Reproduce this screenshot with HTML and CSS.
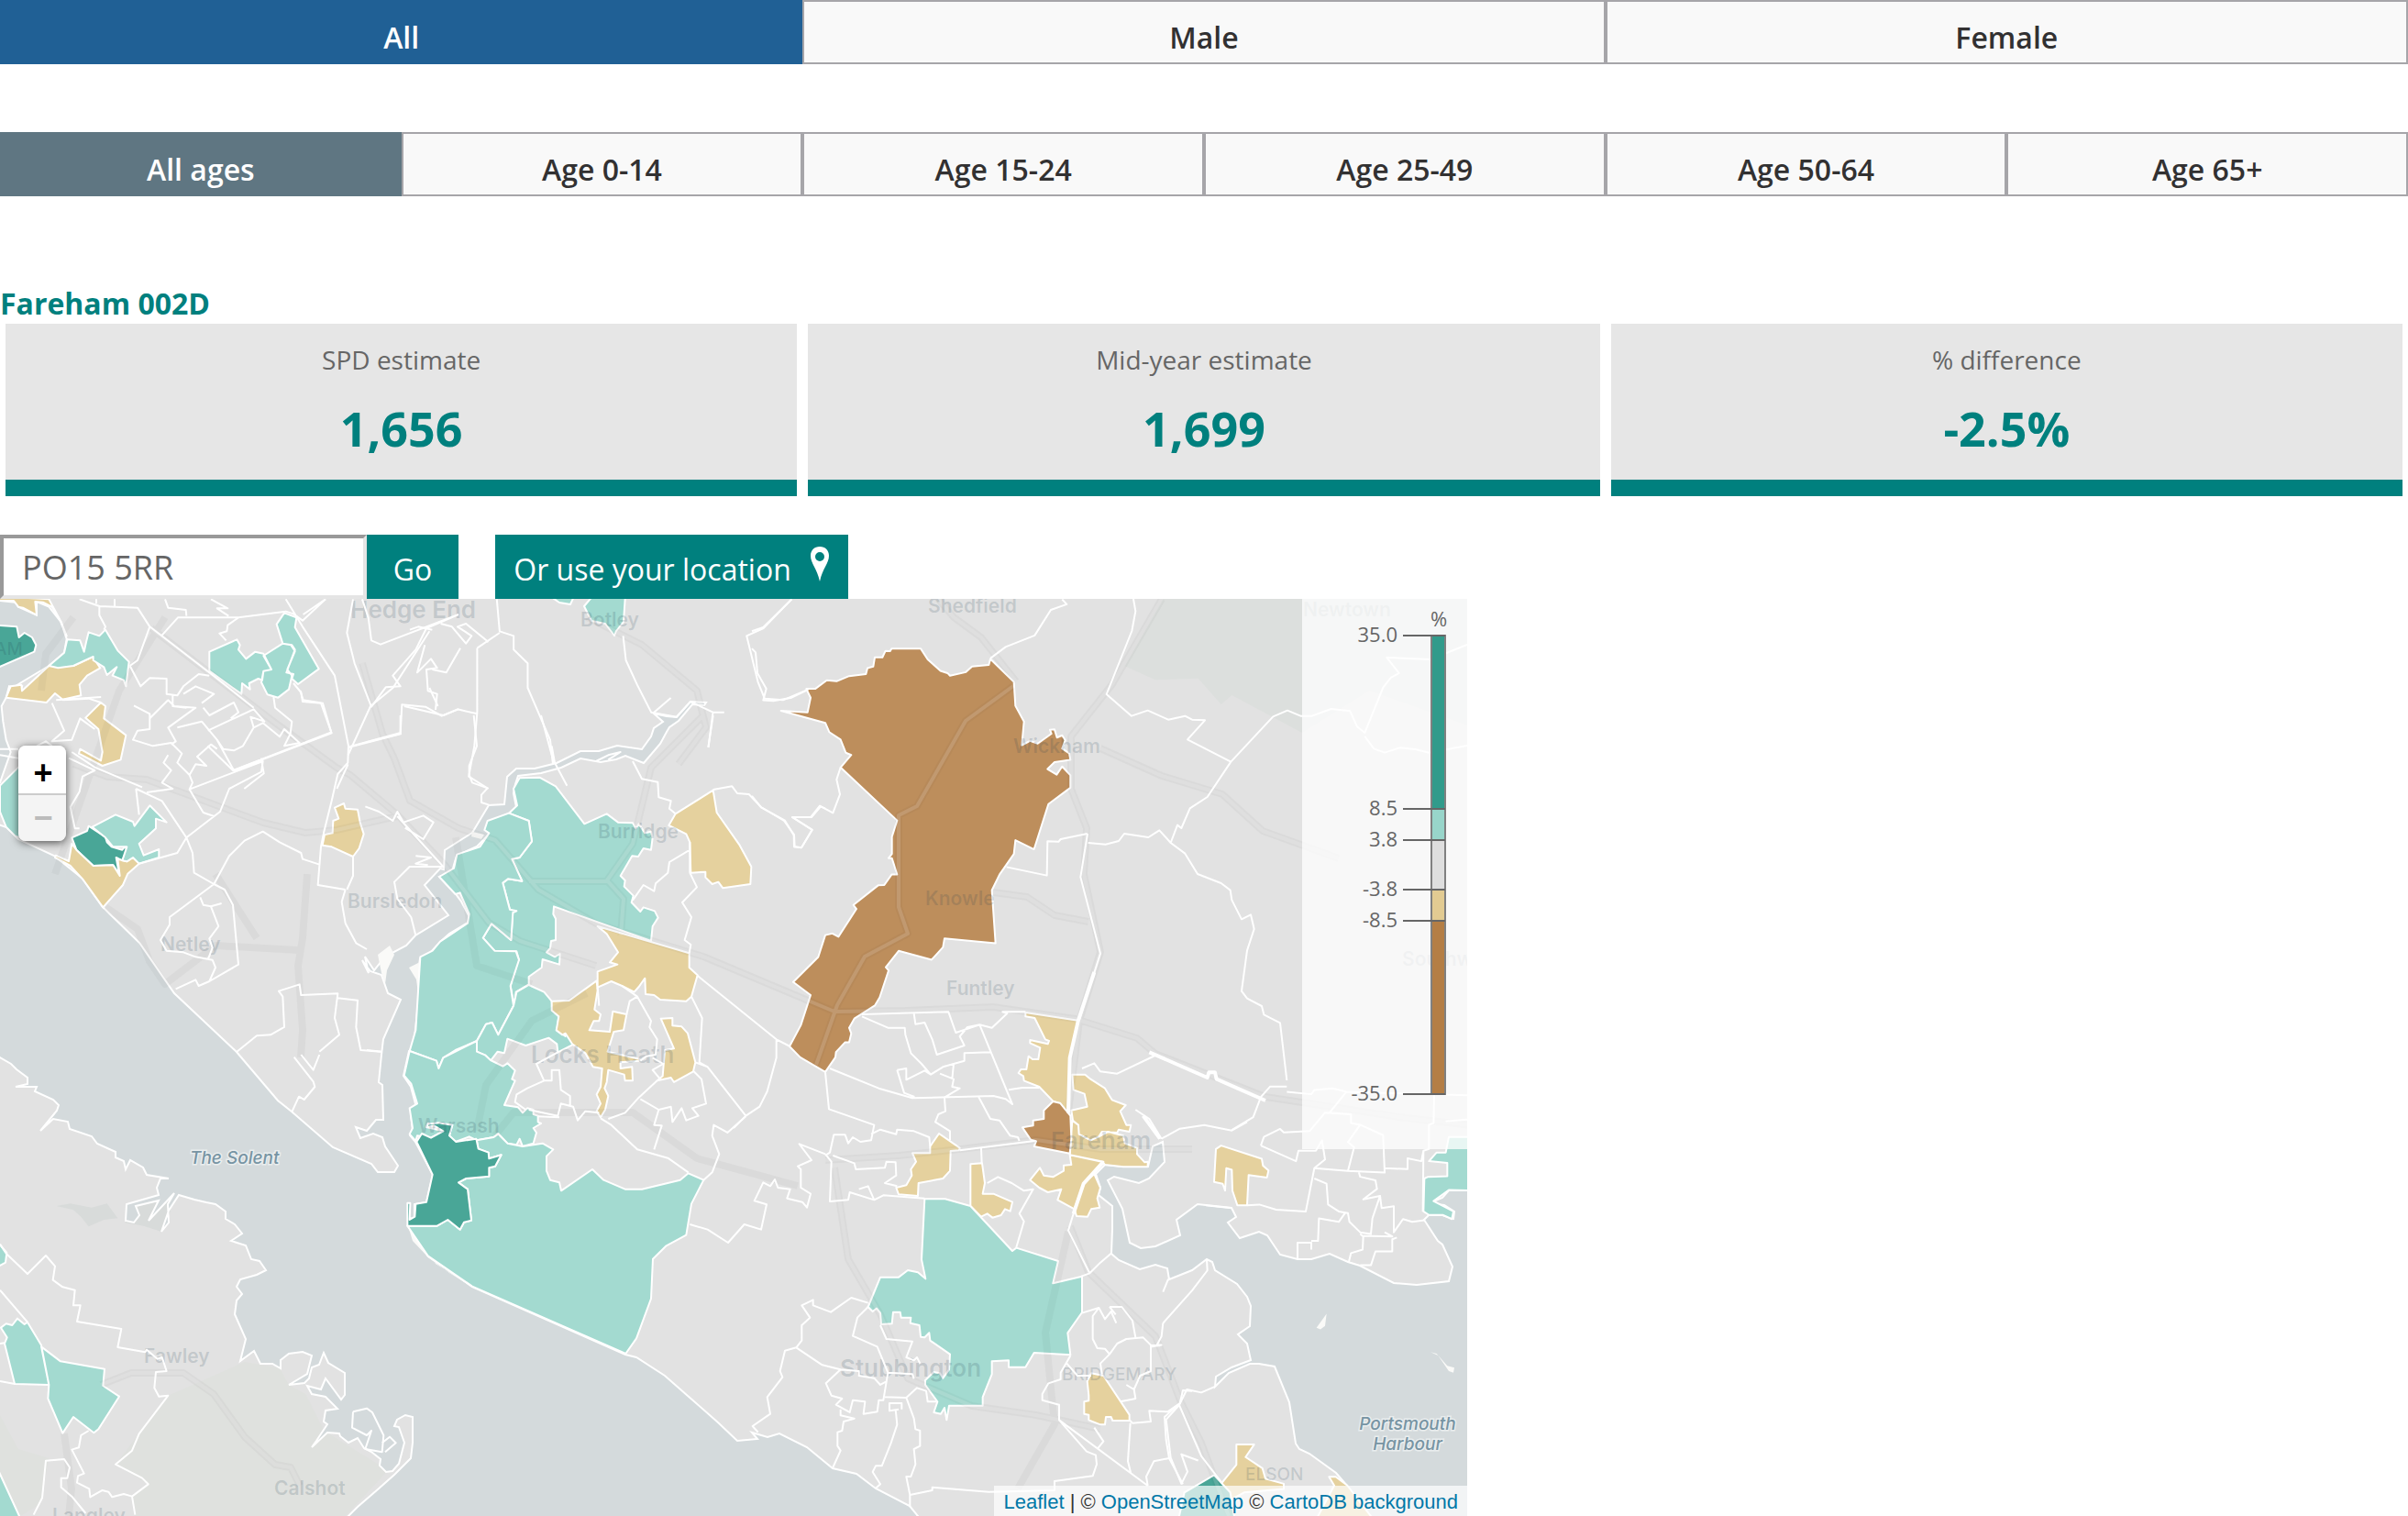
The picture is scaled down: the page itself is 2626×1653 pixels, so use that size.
FILE: index.html
```html
<!DOCTYPE html>
<html lang="en">
<head>
<meta charset="utf-8">
<title>Population estimates by area</title>
<link rel="stylesheet" href="styles.css">
</head>
<body>
<nav class="tabs tabs-sex" aria-label="Sex">
  <button class="tab selected" type="button">All</button>
  <button class="tab" type="button">Male</button>
  <button class="tab" type="button">Female</button>
</nav>
<nav class="tabs tabs-age" aria-label="Age group">
  <button class="tab selected" type="button">All ages</button>
  <button class="tab" type="button">Age 0-14</button>
  <button class="tab" type="button">Age 15-24</button>
  <button class="tab" type="button">Age 25-49</button>
  <button class="tab" type="button">Age 50-64</button>
  <button class="tab" type="button">Age 65+</button>
</nav>
<main>
  <h2 class="area-name">Fareham 002D</h2>
  <div class="cards">
    <section class="card"><h3 class="card-label">SPD estimate</h3><p class="card-value">1,656</p></section>
    <section class="card"><h3 class="card-label">Mid-year estimate</h3><p class="card-value">1,699</p></section>
    <section class="card"><h3 class="card-label">% difference</h3><p class="card-value">-2.5%</p></section>
  </div>
  <form class="search">
    <input class="postcode" type="text" aria-label="Postcode" value="PO15 5RR">
    <button class="btn go" type="button">Go</button>
    <button class="btn locate" type="button">Or use your location
      <svg class="pin" viewBox="0 0 22 38" aria-hidden="true"><path fill-rule="evenodd" d="M11 0C5 0 1 4 1 10c0 8 7 14 10 28 3-14 10-20 10-28 0-6-4-10-10-10zm0 6a5 5 0 0 1 5 5 5 5 0 0 1-10 0 5 5 0 0 1 5-5z"/></svg>
    </button>
  </form>
  <div class="map">
    <svg class="map-canvas" viewBox="0 0 1600 1000" role="img" aria-label="Map of the Solent area">
      <rect class="land" width="1600" height="1000"/>
      <!-- woodland -->
      <g transform="translate(1060,0) scale(.33333)"><path class="wood" d="M625 0H1640V420L1300 300 1080 438 850 315 815 345 740 260 600 265 500 220Z"/></g>
      <g transform="translate(0,497) scale(.33333)"><path class="heath" d="M550 1115 800 1005 915 1025 945 1080 1000 1110 1060 1230 1245 1345 1265 1365 1130 1509 440 1509 435 1445 485 1405 378 1340 455 1240ZM0 1180 60 1290 160 1320 130 1470 68 1509 0 1370Z"/><path class="marsh" d="M185 495 230 487 300 500 350 487 385 535 340 540 290 562 265 530 240 508ZM410 550 440 500 520 478 570 455 555 520 530 580 470 560Z"/></g>
      <!-- water -->
      <g transform="translate(0,-13) scale(.33333)"><path class="water" d="M0 45 50 50 60 65 120 92 120 48 160 65 200 115 218 170 210 215 160 258 70 312 50 325 72 325 65 345 50 330 30 325 20 362 5 390 10 440 20 500 35 540 0 640-20 640-20 45Z"/></g>
      <path class="water" d="M-5 245 7 249 20 262 59 280 90 305 112 336 152 375 190 430 258 494 303 547 318 559 363 598 405 616 412 625 430 625 434 618 420 597 417 587 407 583 393 588 388 576 400 580 410 568 418 568 417 530 413 527 416 497 418 480 437 437 423 430 416 410 404 406 395 394 402 408 398 390 408 405 420 390 443 378 453 367 489 345 463 312 480 294 484 295 485 274 515 255 533 225 550 224 553 194 563 185 583 185 607 179 633 166 653 166 673 160 700 164 710 150 713 141 723 134 713 125 727 128 738 129 753 112 770 113 768 116 755 115 740 133 730 140 727 145 720 158 702 179 682 171 672 175 655 178 633 174 612 184 590 190 565 193 562 202 560 212 563 227 555 234 540 240 535 255 520 270 498 280 495 290 493 298 479 303 497 322 503 330 512 347 510 353 490 365 480 374 470 385 458 392 457 400 460 410 457 430 453 470 450 490 446 493 440 520 448 532 455 558 448 562 450 580 447 585 453 592 472 628 465 658 452 660 452 676 445 675 445 684 467 717 515 750 682 824 694 827 725 847 783 898 804 918 826 916 820 909 837 914 850 910 880 925 908 948 934 954 955 970 992 989 1005 1005 375 1005 390 990 412 971 430 955 448 937 450 920 450 892 442 890 433 895 430 902 435 903 441 920 435 943 428 951 421 952 414 945 415 938 405 930 397 926 390 915 380 920 371 913 370 910 357 909 340 925 345 918 357 900 353 897 355 885 368 883 355 870 340 867 335 858 350 862 355 850 372 873 376 868 376 844 358 833 353 822 348 835 340 838 337 850 332 855 315 857 335 845 340 825 330 821 315 823 306 830 306 839 297 834 284 834 277 820 262 831 268 807 256 780 258 765 264 758 258 750 262 742 280 737 290 732 283 722 274 720 268 705 252 700 264 692 256 682 246 676 246 668 235 660 225 658 212 655 195 650 184 667 176 690 184 680 183 660 190 648 162 678 173 656 148 662 152 672 146 680 137 678 138 660 173 650 171 642 175 632 184 632 160 628 156 620 142 612 137 622 135 613 126 609 126 603 106 594 100 586 76 578 74 570 58 567 44 580 62 558 64 552 58 546 38 537 40 532 17 532 30 529 30 522 18 513 12 507 0 500-5 497Z"/>
      <path class="water" d="M1268 592 1270 614 1253 632 1242 637 1215 630 1208 634 1224 665 1232 702 1244 708 1260 706 1287 694 1283 677 1306 660 1343 664 1348 674 1339 680 1352 697 1373 690 1382 694 1396 715 1415 720 1430 720 1450 714 1470 723 1483 727 1520 746 1545 748 1580 744 1584 728 1573 704 1568 700 1553 677 1558 672 1573 672 1585 676 1586 668 1575 661 1567 660 1563 657 1573 653 1580 645 1605 645 1605 1005 1498 1005 1469 967 1457 953 1428 932 1417 927 1413 921 1406 876 1390 837 1373 834 1363 834 1340 844 1325 859 1326 848 1343 838 1364 830 1360 812 1350 802 1363 793 1364 771 1360 761 1349 747 1325 732 1322 723 1316 720 1300 732 1275 742 1273 730 1260 726 1243 731 1220 721 1212 714 1213 687 1213 662 1198 650 1200 642 1195 627 1205 617 1225 619 1252 619 1257 597Z"/>
      <path class="spit" d="M445 684 450 700 467 718 490 735 515 750 475 725ZM515 254 528 257 525 262 514 259ZM412 388 425 378 430 388 422 405 420 420 416 408ZM446 402 458 396 460 410 456 430 454 415Z"/>
      <g transform="translate(1200,407) scale(.33333,.3782)"><path class="spit" d="M740 985 735 1020 720 1030 707 1025ZM1080 1095 1100 1100 1135 1135 1158 1140 1155 1155 1140 1150 1105 1105Z"/></g>

      <!-- areas, coloured by band -->
      <g class="areas" transform="translate(0,-13) scale(.33333)">
        <path class="hi2" d="M-10 125 55 130 62 165 80 150 105 165 118 190 112 212-10 265ZM235 820 285 798 290 782 345 818 350 835 365 850 400 860 410 848 415 862 400 895 380 885 390 940 370 910 305 912 250 860Z"/>
        <path class="lo1" d="M-10 30 160 40 195 105 218 160 200 115 170 65 140 50 115 48 120 92 75 68 60 65 45 45-10 45ZM20 362 35 325 70 320 72 340 160 258 240 258 303 228 328 265 285 290 260 320 265 355 205 368 180 348 152 378ZM280 428 330 378 345 390 340 430 412 485 395 565 335 585 258 545 262 530 330 568 335 540 322 465ZM1095 722 1125 708 1130 725 1170 728 1178 770 1190 808 1175 855 1155 882 1085 850 1055 845 1062 810 1088 805 1090 765 1108 758ZM235 840 250 860 305 912 370 910 392 945 385 890 415 898 435 885 455 905 418 938 402 975 337 1048 270 955 230 912 180 885 182 878 225 897Z"/>
        <path class="hi1" d="M160 258 210 215 220 172 262 175 275 212 282 180 290 148 325 160 345 140 385 208 422 245 412 325 405 305 368 290 382 262 350 288 340 262 305 240 305 228 240 258 190 265ZM685 212 775 172 785 190 780 205 805 235 835 212 862 218 888 270 862 275 858 305 845 300 815 315 818 335 792 315 790 350 685 275ZM862 225 925 185 952 190 965 210 940 270 955 290 945 335 910 362 875 352 855 312 862 275 888 270ZM905 122 930 85 970 100 965 132 1043 268 975 318 955 300 960 285 937 280 965 205 955 190 925 185ZM0 650 60 590 80 590 80 825 50 815 20 785 0 735ZM302 785 378 745 435 768 440 782 490 715 545 770 510 758 510 790 455 840 470 878 520 858 520 885 455 905 435 885 415 898 400 895 415 850 370 850 345 820Z"/>
      </g>
      <path class="hi1 area" d="M597-5 627-5 622 6 610 4ZM637 8 648-5 682-5 680 25 672 35 670 40 660 27 645 24Z"/>
      <g class="areas" transform="translate(400,127) scale(.33333)">
        <path class="hi1" d="M500 205 565 203 618 232 712 355 785 322 822 350 870 352 880 370 890 355 910 385 930 380 935 400 930 440 905 435 888 462 868 460 830 525 845 540 842 560 872 590 866 612 895 642 905 628 942 640 953 662 935 690 930 738 612 625 610 650 618 665 618 735 603 738 600 762 588 775 615 790 632 780 630 815 575 798 572 825 530 855 530 880 488 905 482 950 470 885 490 820 420 842 450 808 498 800 490 772 418 770 380 728 408 682 472 735 478 640 468 635 445 548 462 535 508 542 475 470 500 465 540 412 530 345 465 320 492 295 480 240Z"/>
        <path class="hi1" d="M465 320 530 345 540 412 500 465 475 470 508 542 462 535 445 548 468 635 490 640 478 645 472 735 408 682 380 728 418 770 488 772 498 800 470 885 480 950 430 1045 410 1005 390 1010 360 1065 290 1095 250 1120 235 1155 228 1130 140 1098 160 1030 175 790 215 770 240 740 330 680 335 650 305 580 290 585 237 528 285 500 295 455 370 430 400 385 385 375 395 345Z"/>
        <path class="hi1" d="M490 905 530 882 580 905 605 935 608 965 628 985 622 1030 650 1050 655 1035 672 1055 678 1075 625 1102 622 1075 595 1055 520 1080 460 1058 450 1105 428 1100 405 1130 388 1112 360 1100 360 1065 390 1010 410 1005 430 1045 480 950Z"/>
        <path class="lo1" d="M988 360 1010 322 1133 245 1145 318 1220 425 1258 495 1255 552 1165 565 1150 545 1130 552 1108 530 1108 512 1060 515 1057 415 1045 388ZM755 690 1055 778 1055 825 1082 850 1062 920 1045 935 960 930 940 915 912 912 910 860 890 888 875 905 835 885 800 870 755 890 755 838 820 815 795 808 822 775 785 715ZM605 935 662 933 752 868 755 900 745 962 765 978 760 1000 742 1000 728 1030 795 1035 805 968 850 978 840 1030 808 1035 788 1100 895 1125 890 1130 830 1135 830 1155 868 1150 870 1195 845 1195 842 1175 790 1160 785 1200 778 1220 790 1245 780 1290 765 1315 752 1295 765 1270 752 1240 765 1215 770 1155 740 1150 715 1105 672 1075 650 1040 640 1045 620 1030 628 985 605 965ZM962 992 1000 990 1000 1015 1030 1018 1050 1040 1075 1135 1068 1165 1005 1200 995 1185 950 1195 968 1180 975 1095 1005 1090Z"/>
      </g>
      <g class="areas" transform="translate(400,477) scale(.33333)">
        <path class="hi1" d="M140 48 228 80 235 105 250 70 360 15 360 50 388 62 405 78 445 98 460 88 485 112 475 140 485 145 450 225 495 232 510 250 525 235 545 240 545 255 560 260 560 280 570 285 545 300 555 315 545 350 510 360 500 335 490 355 460 350 430 318 415 330 360 340 335 328 290 345 270 325 280 290 235 290 200 285 195 297 250 310 210 332 165 325 160 342 140 320 150 300 140 235 165 220 145 155 122 128Z"/>
        <path class="hi1" d="M133 620 230 620 265 600 305 632 318 608 342 602 330 500 300 478 325 465 400 458 400 430 420 425 440 388 400 400 398 380 365 368 360 340 415 330 430 320 460 350 510 360 575 350 610 370 588 392 588 440 600 470 630 478 636 505 738 435 775 470 845 500 900 500 1025 470 1052 448 1102 470 1062 548 1045 650 980 685 936 728 930 858 882 988 847 1038 345 818 200 718Z"/>
        <path class="hi2" d="M163 345 180 318 210 332 250 310 220 292 195 298 200 287 235 283 280 290 270 325 292 345 358 335 365 368 398 380 400 400 440 388 420 425 400 430 400 458 325 465 300 478 330 500 342 602 318 608 305 632 265 600 230 620 133 620 133 545 142 545 140 600 157 590 160 548 195 542 215 452Z"/>
      </g>
      <g class="areas" transform="translate(820,-3) scale(.33333,.35714)">
        <path class="lo2" d="M178 283 207 283 245 257 277 260 318 244 373 238 378 220 397 215 402 187 427 187 437 167 452 168 457 160 552 160 575 193 617 228 640 235 648 243 700 232 720 215 775 210 780 192 857 262 862 335 890 383 883 455 910 442 935 450 980 420 975 408 990 407 998 432 1015 425 1025 440 1015 465 1038 480 1042 500 990 507 967 528 997 545 1015 520 1042 547 1042 585 970 635 923 773 862 745 857 787 810 850 785 898 797 1060 630 1045 625 1072 588 1110 480 1083 438 1133 447 1143 418 1225 402 1250 335 1290 318 1318 325 1335 318 1362 305 1362 275 1392 273 1408 240 1453 158 1408 123 1375 160 1310 192 1218 135 1178 217 1102 240 1035 263 1030 283 1040 342 955 332 943 413 883 433 882 457 850 475 850 458 800 447 800 458 787 458 735 475 685 290 523 325 485 307 478 290 438 253 415 240 387 95 350 182 355 192 310Z"/>
      </g>
      <g class="areas" transform="translate(900,407) scale(.33333)">
        <path class="lo1" d="M655 132 827 158 800 280 793 465 768 430 745 422 700 375 650 355 648 340 632 330 640 318 658 318 665 275 678 285 697 285 703 247 670 232 670 222 728 235 732 225 720 220 685 150 655 145ZM808 335 850 335 868 350 915 380 938 418 983 435 965 455 985 500 1000 500 995 522 960 515 955 525 905 522 895 538 868 550 830 530 828 500 810 485 805 452 857 440 848 398 812 385ZM808 485 828 500 830 530 868 550 895 538 925 522 975 535 980 560 1020 575 1020 595 1045 622 1055 620 1055 637 975 637 915 630 905 620 800 598ZM800 598 910 620 845 692 815 775 760 745 772 710 728 720 700 705 670 680 702 640 715 665 745 670 780 650 780 632 805 630ZM845 692 880 660 900 705 890 740 898 770 870 775 858 800 822 798 815 775ZM343 570 372 528 440 575 437 583 410 585 408 650 385 675 305 690 303 732 240 727 232 705 265 697 283 665 280 645 297 620 285 592 343 592ZM475 628 513 625 522 690 515 725 550 725 612 752 605 782 588 775 575 795 547 803 530 790 510 800 475 765ZM870 1312 910 1320 995 1448 995 1467 940 1467 935 1455 918 1455 915 1480 900 1480 862 1465 862 1448 847 1445 847 1405 862 1402 862 1385 857 1338Z"/>
        <path class="lo2" d="M715 480V452L745 423 768 428 802 470 805 545 800 593 683 570 690 553 672 548 645 508 680 502 680 485Z"/>
        <path class="hi1" d="M325 742 392 742 475 765 612 912 625 902 762 945 745 1018 840 995 840 1113 793 1180 802 1252 683 1245 655 1292 600 1292 600 1270 545 1273 545 1315 515 1390 515 1418 405 1418 397 1465 390 1425 378 1445 355 1440 367 1405 327 1350 327 1335 355 1308 375 1312 385 1328 405 1300 408 1250 343 1205 340 1180 325 1195 312 1193 308 1155 278 1148 280 1130 248 1130 245 1112 222 1112 218 1150 183 1152 180 1115 168 1100 155 1110 140 1095 180 998 240 998 270 975 303 982 328 1003 315 940Z"/>
      </g>
      <g class="areas" transform="translate(1200,407) scale(.33333,.3782)">
        <path class="lo1" d="M378 510 395 500 528 538 532 558 550 572 545 592 485 585 480 672 448 672 432 630 430 570 412 565 408 630 400 610 372 605ZM445 1362 503 1362 475 1398 530 1430 540 1460 600 1475 600 1490 470 1500 430 1520 395 1475 445 1420ZM748 1455 770 1455 808 1480 895 1580 705 1580 765 1480Z"/>
        <path class="hi1" d="M1140 475 1215 475 1215 630 1140 628 1090 660 1155 690 1150 712 1120 700 1075 700 1057 690 1060 595 1072 590 1135 588 1135 550 1075 545 1100 520 1130 520Z"/>
        <path class="hi2" d="M275 1500 372 1450 425 1500 440 1580 255 1580Z"/>
      </g>
      <g class="areas" transform="translate(0,497) scale(.33333)">
        <path class="hi1" d="M3 893 20 880 40 885 57 863 80 882 90 875 135 950 160 1080 48 1077 15 945 23 925ZM135 955 198 1003 342 1028 337 1083 390 1118 322 1225 307 1237 240 1185 205 1238 157 1125 160 1080ZM-10 610 22 648 18 680-10 695ZM-10 1350 68 1520-10 1520Z"/>
      </g>

      <!-- roads: a darker casing with a lighter centre -->
      <g class="roads">
        <path id="roads" class="casing" d="M80 180 117 194 160 197 287 244 333 255 367 252 433 237M165 32 300 135 367 184 382 192 433 235 485 290 533 353 567 373 650 400M395 70 417 147 430 174 447 220 500 250 540 263 587 317 650 354 767 390 910 450 987 449 1083 445 1173 458 1240 479 1260 496 1380 543 1533 566 1605 574M1267 0 1213 93 1168 150 1168 207 1185 250 1182 300 1200 385 1177 460 1165 560M1200 163 1267 193 1333 213 1377 253 1460 283M1105 95 1053 133 1000 226 980 236 980 336 990 365 943 390 913 443 890 508M900 612 980 607 1047 600 1130 590 1200 600 1300 600M1167 684 1187 734 1260 804 1287 874 1310 920 1340 1000M110 857 143 844 200 844 233 867 267 914 300 944 317 947 327 967M767 127 710 184 690 267 662 307 680 327 677 367M577 308 662 308M335 300 330 370 325 400 330 470 328 500M115 336 150 360 163 395 180 420 235 378 325 383M235 300 280 370M1083 320 1120 325 1150 345 1187 352M1023 0 1040 20 1070 42 1108 90M497 260 520 400 580 420M520 580 530 530 580 460 640 430M540 585 560 560 690 560 760 610 870 640M910 620 925 720 960 780 990 850 1060 880 1130 890 1200 905M1165 690 1140 800 1150 900 1110 970M70 910 78 970 75 1000M45 100 50 60 80 20M60 300 130 100 180 20M640 20 700 50 760 100 770 140 740 180"/>
        <path class="centre" d="M80 180 117 194 160 197 287 244 333 255 367 252 433 237M165 32 300 135 367 184 382 192 433 235 485 290 533 353 567 373 650 400M395 70 417 147 430 174 447 220 500 250 540 263 587 317 650 354 767 390 910 450 987 449 1083 445 1173 458 1240 479 1260 496 1380 543 1533 566 1605 574M1267 0 1213 93 1168 150 1168 207 1185 250 1182 300 1200 385 1177 460 1165 560M1200 163 1267 193 1333 213 1377 253 1460 283M1105 95 1053 133 1000 226 980 236 980 336 990 365 943 390 913 443 890 508M900 612 980 607 1047 600 1130 590 1200 600 1300 600M1167 684 1187 734 1260 804 1287 874 1310 920 1340 1000M110 857 143 844 200 844 233 867 267 914 300 944 317 947 327 967M767 127 710 184 690 267 662 307 680 327 677 367M577 308 662 308M1083 320 1120 325 1150 345 1187 352M1023 0 1040 20 1070 42 1108 90M910 620 925 720 960 780 990 850 1060 880 1130 890 1200 905M640 20 700 50 760 100 770 140 740 180"/>
      </g>

      <g class="labels">
        <text x="382" y="21" class="l-lg">Hedge End</text><text x="633" y="30">Botley</text><text x="1012" y="15">Shedfield</text><text x="1105" y="168">Wickham</text><text x="1009" y="334">Knowle</text><text x="1032" y="432">Funtley</text><text x="1146" y="600" class="l-lg">Fareham</text><text x="652" y="261">Burridge</text><text x="379" y="337">Bursledon</text><text x="175" y="384">Netley</text><text x="579" y="506" class="l-lg">Locks Heath</text><text x="456" y="582">Warsash</text><text x="916" y="848" class="l-lg">Stubbington</text><text x="1158" y="852" class="l-sm">BRIDGEMARY</text><text x="1358" y="961" class="l-sm">ELSON</text><text x="157" y="833">Fawley</text><text x="299" y="977">Calshot</text><text x="57" y="1007">Langley</text><text x="-6" y="61" class="l-sm">AM</text><text x="1421" y="19">Newtown</text><text x="1529" y="400">Southwick</text>
      </g>

      <!-- area boundaries -->
      <g class="bounds">
        <path transform="translate(0,-13) scale(.33333)" d="M260 40 325 63 450 68 490 130 700 292 830 395M375 40V65M315 40V55M325 60V92L345 130 340 140M490 130 450 240 425 258M530 158 582 100 780 100 935 80 960 88 990 110 1065 40M935 40 990 130 1095 290 1140 520 1138 575 1105 612 1085 700 1060 800 1050 850 1040 975 1130 990M1155 40 1135 150 1160 250 1215 392 1262 328 1310 325 1285 290 1360 205 1395 135 1500 90M1185 40 1205 100 1215 175 1245 188 1500 90M1390 190 1365 280 1410 235 1430 265 1395 270 1400 340 1430 350 1425 402M1310 478 1315 385 1392 392 1445 422 1500 400M1308 478 1145 522M540 40 550 68 608 75 610 95M690 40 745 70 710 70 748 95M780 100 745 125 742 145 718 152 740 175M425 258 460 325 490 298 545 300 545 350 580 355 600 325 650 285 685 290M438 388 490 415 490 465 450 470 435 500 500 520 560 510 595 545 580 575 620 615 640 580 675 585 645 555 690 515 710 530M490 430 550 370 570 390 640 395 550 460 575 505 560 515M580 460 660 440 710 500 765 600 1085 478 1050 380 990 375 985 345 960 315M680 470 830 400 865 440 820 425 830 460M710 500 730 530 765 535 795 520 830 460 860 445 915 490 930 465 980 510 930 520 950 480 955 440 900 395 895 360M660 380 700 350 640 325 600 350M665 395 685 420 765 378 780 410 755 430M565 350V390L610 395M620 662 860 570 855 605 750 660 720 735 610 820 580 870 455 905M610 820 630 870 635 935 700 972 750 880 800 830 860 800 915 835 985 870 990 890 1045 908M445 660 530 700 610 820M445 660 455 745M235 540 310 590 465 655M480 672 565 660 530 640 560 600 535 575 550 550M620 615 630 640 620 662 665 738 700 750M225 560 310 600 270 620 260 670 230 720 245 790 260 790M700 972 555 1080 555 1105 525 1155 545 1190 600 1195 640 1210 695 1220 705 1245 685 1290 780 1235 762 1040 735 990 700 972M655 1015 665 1040 690 1045 725 1035M690 1045 715 1110 685 1150 695 1180 680 1220M685 1290 650 1305 640 1285 575 1315M775 1520 840 1468 885 1465 930 1440 925 1340 912 1322 980 1300 985 1335 1105 1330 1095 1410 1110 1465 1045 1520M1105 1345 1170 1352 1165 1440 1180 1515 1245 1520M1195 718 1240 735 1285 765 1300 735 1320 770 1385 748 1418 770 1385 825 1325 788M1300 750 1450 915 1340 915 1290 965 1300 1020 1345 1080 1360 1140M1360 880 1410 885 1360 905 1400 910M1130 990 1118 1030 1130 1100 1165 1165 1200 1185M1155 880 1155 945 1135 990M205 370 290 365 330 378M170 380 210 470 170 505 235 500 262 430 310 465M0 530H60M0 550 60 560M120 520 150 505 170 520"/>
        <path transform="translate(0,-93) scale(.6122,.33333)" d="M1410 280 1360 375 1330 400 1350 550 1362 605 1395 610 1440 575M885 280 890 385 915 400 915 445 940 490 940 570 980 740 985 820M770 380 745 370 730 380M765 385 700 570 660 630M850 440 850 650 845 760 835 860 870 900M660 630 620 790M715 720 620 765M850 440 890 390M720 630 790 660 815 640 850 655M1110 400 1115 480 1135 560 1160 650 1205 665 1230 615 1270 650H1290M1270 650 1262 765M785 360 805 370 830 425 840 400 815 370 830 360 870 420M765 570 780 630M770 510 795 520 820 440M1165 650 1195 603M535 580 540 610 575 620 590 715 415 840 370 760M100 610 180 600M580 280 540 330M465 800 470 850 435 900M600 900 620 820"/>
        <path transform="translate(400,127) scale(.33333)" d="M350 0 360 100 335 165 335 195 345 220 395 238 375 260 375 285 400 293M570 0 612 155M605 100 615 155 655 230M110 0V60L0 88M1133 0 1117 105M750 150 790 130 830 120 790 145M870 150 900 208 952 218 955 268 995 280 990 305 1010 322M1133 243 1195 232 1212 255 1250 258 1290 300 1365 345 1398 390 1400 430 1422 433 1457 375 1393 333 1455 333 1485 298 1500 305M1057 415V515M1057 440 990 480 985 515 945 550 940 575 905 555 870 605M1057 515 1080 562 1032 612 1062 660 1040 735 1060 750 1055 778M1080 850 1340 1060 1385 1083M1062 920 1097 990 1088 1135 1115 1150 1240 1310M1340 1060V1120L1310 1230 1285 1280 1240 1310 1200 1350M755 890 760 950M850 978 860 935 885 920 835 885M885 920 930 1000 925 1020 950 1060 945 1110 915 1115 895 1130M625 1102 555 1140 580 1195 605 1195 605 1160 630 1160 635 1225 665 1245 665 1275M580 1195 525 1220 490 1240 485 1265 520 1290M530 1290 600 1305 625 1310 635 1270 675 1280 690 1325 715 1295 760 1300M950 1195 890 1250 845 1300 790 1320M895 1255 955 1290 995 1280 1000 1330 1030 1285 1045 1325 1085 1310 1065 1285 1110 1270 1095 1190 1070 1165M1075 1135 1115 1150M935 1120 970 1140 935 1160 960 1190M0 1095 50 1100"/>
        <path transform="translate(400,477) scale(.33333)" d="M765 268 800 290 885 370 985 398 1052 445M955 240 940 290 965 292 940 370M1240 262 1180 315 1135 290 1130 325 1153 385 1130 445 1102 470M560 262 630 265M1057 615 1115 632 1182 675 1235 615 1290 632 1308 550 1268 538 1297 478 1320 490 1335 468 1345 495 1385 500 1375 530 1425 542 1440 560 1452 515 1420 495 1420 435 1410 425 1455 405 1415 352 1500 385"/>
        <path transform="translate(820,-3) scale(.33333,.35714)" d="M0 107 37 95 130 10M0 160 12 172 18 235 47 283 37 318 70 320 130 310 178 288M290 523 277 560 288 605 265 662 222 640 192 675 132 675 197 713 162 768 138 765 137 730 108 685 30 645 0 610M780 190 830 155 925 120 978 42 1030 25 1015 10M833 827 965 853 967 748 1003 750 1010 742 1097 725"/>
        <path transform="translate(900,407) scale(.33333)" d="M120 138 403 130 427 198 505 172 612 432 590 415 550 405 285 412 175 380 15 315M120 145 205 182 260 182 262 205 280 265 315 300 345 335 385 310 455 290 455 265 540 262M290 135 295 170 325 165 350 220 365 270 455 240 440 210 465 180 505 172 545 182 595 135 580 130 655 130M235 320 265 315 265 352 325 322 345 335M235 320 258 395 292 408M375 332 420 350 415 375 440 380 390 410 393 455 370 465 360 490 408 520V550M420 300 415 350M500 405 540 480 570 485 605 535 630 540 635 552M0 328 12 448 160 500 150 550 115 555 90 540 75 560 65 532 28 532 15 590 0 600M150 530 180 515 232 530 235 515 290 520 340 540 343 570M440 583 685 552M510 577 512 625M600 385 645 378 700 378M0 595 20 620 15 750 75 745 80 720 160 745 190 730 325 740M25 600 95 625 100 645 195 640 200 620 230 622 232 665 195 690 235 700M110 710 140 700 160 745M530 690 565 670 610 690 650 715 680 710 635 790 650 815 625 900M815 780 795 845 865 985 838 995M865 985 900 950 935 920M1100 545 1160 512 1240 500 1330 518 1380 490M1015 450 1060 480 1100 545M840 315 880 298 900 325 955 332 1085 270"/>
        <path class="thick" transform="translate(900,407) scale(.33333)" d="M880 0 827 160 800 280 795 460M1060 262 1250 345 1255 328 1275 328 1280 350 1440 420M1040 470 1095 545M910 620 845 692 812 790"/>
        <path transform="translate(1200,407) scale(.33333,.3782)" d="M610 345 690 352 700 340 760 335 805 345 1200 355M525 360 555 330 610 330M525 360 500 418 430 455M205 922 222 885M205 1012 300 918 350 860 348 828M205 1012 200 1050 185 1075 200 1075 165 1080M525 500 640 545 648 515 705 515 725 485 735 540 700 565M525 500 535 475 588 452 600 462 685 458 735 405 820 410 820 435 850 440 925 470 930 578 810 573 700 565 672 690 575 685 520 670 480 672M810 573 830 505 810 490 850 440M930 565 1005 568 1005 537 1050 545 1057 515 1075 510 1075 440 1090 435 1092 355M1057 515 1055 690M700 595 740 610 745 670 780 690 810 695 815 720 850 750 885 755 890 710 915 645 860 655 905 625 900 600 850 590 845 575M645 825V780H690V800M690 775 712 775 715 710 780 720 800 695M850 755 860 762 858 800 820 810 812 838M858 760 955 762 930 750M970 765 955 770 955 805 900 805 885 845 850 845M915 645 920 680 960 675V750L990 712 1020 720 1060 715M750 405 805 345M1130 430 1200 425M258 1248 283 1203 330 1212 375 1195M258 1248 330 1395 400 1475M258 1248 215 1290 230 1400 265 1475 285 1440 265 1390 320 1408M430 680 345 672"/>
        <path transform="translate(780,727) scale(.33333)" d="M500 122 445 105 378 152 320 130 320 112 283 130 310 170 283 195 283 245 265 268 228 278 212 345 220 365 170 430 180 485 122 525 140 545M265 268 350 325 410 340 470 345 470 360 520 368 540 390 558 380M410 340 362 385 380 425 415 435 395 455 440 480 450 440 490 445 485 485 530 478 535 440 550 440 565 350 645 355 650 370M555 430 625 432 660 400 690 410 695 445 725 445M500 135 465 170 450 230 530 265 565 350M540 195 560 240 645 248 625 300 650 310 660 300 670 320M410 470 410 490 455 500 420 510 415 540 400 545 400 590 410 605 385 660M600 470 570 475V450H610V470M590 470 595 520 575 580 545 655 525 655 515 675 540 715 525 728M625 432 650 500 655 535 670 540 670 590 650 600 655 650 640 690 625 690 637 750 637 790M637 750 710 735 710 725 895 740 1110 735 1110 705 1235 688 1248 650 1245 620 1215 608 1125 505 1125 455 1070 440 1070 420 1090 385 1130 372 1130 350 1162 295M1150 320 1185 360 1230 360M1125 505 1415 720M1200 155 1255 138 1235 165 1235 240 1250 270 1275 272 1290 290 1260 320 1265 355M1290 135 1330 135 1365 180 1375 235M1255 138 1275 175 1295 150 1312 188M1290 135 1310 160M1290 290 1315 255 1345 240 1400 235 1425 260 1455 262M1425 260 1425 345 1390 360 1370 405 1345 390M1325 445 1375 435 1370 405M1355 505 1365 515 1425 510 1420 475 1480 478 1520 450 1530 408 1560 410M1358 515 1350 640 1360 680M1520 450 1470 495 1475 570 1485 630 1435 640 1410 690 1415 720M1485 630 1530 715M1240 530 1270 575 1250 600"/>
        <path transform="translate(1060,0) scale(.33333)" d="M528 0 535 40 523 105 440 312 522 383 575 365 642 395 697 383 720 395 762 397 705 460 847 533 985 385 1032 365 1075 383 1112 383 1175 360 1237 367 1260 418 1285 438 1345 290 1370 258 1397 243 1357 192 1500 198 1620 150M1285 450 1315 490 1350 503 1400 487 1450 492 1495 503 1620 480M847 533 770 648 713 685 685 750 672 740 650 798 613 757 577 780 498 768 480 792 437 803 380 798M650 798 697 833 738 900 815 930 845 953 850 985 882 1048 912 1033 923 1080 900 1150 882 1283 900 1307 948 1332 955 1360 1008 1387 1030 1575M378 768 355 910 420 1160 350 1380"/>
        <path transform="translate(0,497) scale(.33333)" d="M0 620 20 650 90 717 150 657 180 692 173 737 205 760 245 770 240 820 263 820 252 873 397 897 385 957 475 973 480 965 515 995 530 990 545 1035 510 1038 505 1090 520 1118 550 1115 455 1240 432 1295 378 1340 465 1385 485 1405 432 1445 442 1505M432 1445 405 1437 367 1447 355 1430 335 1425 295 1447 292 1420 252 1400 255 1378 275 1370 235 1292 258 1285 265 1245 290 1230M0 770 90 875M0 945 15 943M0 1068 48 1077M110 1505 138 1450 150 1328 210 1323 228 1350 220 1385 200 1385 200 1415 235 1445 280 1500M955 187 978 137 995 147 1030 105 1025 88 962 8M985 0 1025 50 1045 0M1155 1168 1152 1220 1200 1245 1215 1230 1195 1290 1250 1300 1255 1245 1218 1170 1200 1157 1155 1168M1250 1270 1275 1250 1295 1270 1260 1300"/>
      </g>
      <g class="sea-labels">
        <text x="207" y="616">The Solent</text>
        <text x="1535" y="906" text-anchor="middle">Portsmouth</text>
        <text x="1535" y="928" text-anchor="middle">Harbour</text>
      </g>
    </svg>

    <div class="zoom">
      <button class="zoom-btn zoom-in" type="button" aria-label="Zoom in">+</button>
      <button class="zoom-btn zoom-out" type="button" aria-label="Zoom out" disabled>−</button>
    </div>

    <div class="legend">
      <svg viewBox="0 0 180 600" role="img" aria-label="Percentage difference key">
        <rect class="hi2" x="141" y="40" width="15" height="189"/>
        <rect class="hi1" x="141" y="229" width="15" height="34"/>
        <rect class="mid" x="141" y="263" width="15" height="54"/>
        <rect class="lo1" x="141" y="317" width="15" height="34"/>
        <rect class="lo2" x="141" y="351" width="15" height="189"/>
        <rect class="key-frame" x="141" y="40" width="15" height="500"/>
        <path class="key-ticks" d="M110 40h46M110 229h46M110 263h46M110 317h46M110 351h46M110 540h46"/>
        <g class="key-text" text-anchor="end">
          <text x="104" y="47">35.0</text><text x="104" y="236">8.5</text><text x="104" y="270">3.8</text><text x="104" y="324">-3.8</text><text x="104" y="358">-8.5</text><text x="104" y="547">-35.0</text>
          <text x="149" y="30" text-anchor="middle">%</text>
        </g>
      </svg>
    </div>

    <div class="credit"><a href="#leaflet">Leaflet</a> | © <a href="#osm">OpenStreetMap</a> © <a href="#carto">CartoDB background</a></div>
  </div>
</main>
</body>
</html>
```
FILE: styles.css
```css
* { box-sizing: border-box; }
body { margin: 0; background: #fff; color: #323132; font-family: "Open Sans", sans-serif; }
button { font-family: inherit; }
h2, h3, p { margin: 0; }

.tabs { display: grid; grid-auto-flow: column; grid-auto-columns: 1fr; }
.tabs-age { margin-top: 74px; }
.tab {
  height: 70px;
  padding: 12px 0 0;
  border: 2px solid #a6a5a9;
  background: #f9f9f9;
  color: #323132;
  font-size: 32px;
  font-weight: 600;
  line-height: 44px;
}
.tab.selected { color: #fff; }
.tabs-sex .selected { background: #206095; border-color: #206095; }
.tabs-age .selected { background: #5f7682; border-color: #5f7682; }

.area-name { margin-top: 95px; font-size: 32px; font-weight: 700; line-height: 44px; color: #00807e; }

.cards { display: grid; grid-template-columns: repeat(3, 1fr); gap: 12px; padding: 0 6px; }
.card {
  display: flex;
  flex-direction: column;
  align-items: center;
  gap: 20px;
  padding: 20px 0;
  border-bottom: 18px solid #00807e;
  background: #e6e6e6;
}
.card-label { font-size: 28px; font-weight: 400; line-height: 38px; color: #666; }
.card-value { font-size: 52px; font-weight: 700; line-height: 72px; color: #00807e; }

.search { display: flex; height: 70px; margin-top: 42px; }
.postcode {
  width: 400px;
  padding: 0 20px;
  border: 4px solid;
  border-color: #999 #e5e5e5 #e5e5e5 #999;
  background: #fff;
  color: #666;
  font-family: inherit;
  font-size: 36px;
}
.btn {
  display: flex;
  align-items: center;
  justify-content: center;
  border: 0;
  background: #00807e;
  color: #fff;
  font-size: 32px;
  line-height: 44px;
  padding: 5px 20px 0;
}
.go { width: 100px; }
.locate { width: 385px; margin-left: 40px; gap: 20px; }
.pin { flex: none; width: 22px; height: 38px; margin-bottom: 12px; fill: #fff; }

.map { position: relative; width: 100%; max-width: 1600px; overflow: hidden; }
.map-canvas { display: block; width: 100%; height: auto; }
.land { fill: #e2e2e2; }
.wood { fill: #dcdfdd; }
.heath { fill: #dfe1de; }
.marsh { fill: #d8dbda; }
.water { fill: #d4dadc; stroke: #fff; stroke-width: 2; vector-effect: non-scaling-stroke; }
.spit { fill: #fafaf8; }
.areas path, .area { stroke: #fff; stroke-width: 2; vector-effect: non-scaling-stroke; stroke-linejoin: round; }
.hi2 { fill: #49a697; }
.hi1 { fill: #a3dad0; }
.lo1 { fill: #e5d19e; }
.lo2 { fill: #bd8e5c; }
.roads { fill: none; stroke-linejoin: round; }
.roads .casing { stroke: #000; stroke-opacity: .03; stroke-width: 8; }
.roads .centre { stroke: #fff; stroke-opacity: .14; stroke-width: 4; }
.bounds { fill: none; stroke: #fff; stroke-width: 2; }
.bounds path { vector-effect: non-scaling-stroke; stroke-linejoin: round; }
.bounds .thick { stroke-width: 4; }
.labels { fill: #1e3c50; fill-opacity: .17; font-family: Inter, sans-serif; font-size: 21px; font-weight: 600; }
.labels .l-lg { font-size: 26px; }
.labels .l-sm { font-size: 19px; font-weight: 500; }
.sea-labels {
  fill: #7794a3;
  stroke: #e9edee;
  stroke-width: 3;
  paint-order: stroke;
  font-family: Inter, sans-serif;
  font-size: 19px;
  font-style: italic;
  font-weight: 500;
}

.zoom {
  position: absolute;
  left: 20px;
  top: 160px;
  width: 52px;
  border-radius: 8px;
  overflow: hidden;
  box-shadow: 0 2px 10px rgba(0, 0, 0, .65);
}
.zoom-btn {
  display: block;
  width: 100%;
  height: 52px;
  padding: 0;
  border: 0;
  background: #fff;
  color: #000;
  font: 700 36px/44px "Liberation Sans", sans-serif;
}
.zoom-in { padding: 8px 0 0 2px; }
.zoom-out { padding-left: 2px; border-top: 2px solid #ccc; background: #f4f4f4; color: #bbb; }

.legend { position: absolute; top: 0; right: 0; width: 180px; background: rgba(255, 255, 255, .75); }
.legend svg { display: block; width: 100%; }
.legend .hi2 { fill: #319b8b; }
.legend .hi1 { fill: #98d5ca; }
.legend .mid { fill: #dedede; }
.legend .lo1 { fill: #e2cb92; }
.legend .lo2 { fill: #b47e45; }
.key-frame { fill: none; stroke: #808080; stroke-width: 2; }
.key-ticks { stroke: #666; stroke-width: 2; }
.key-text { fill: #666; font-size: 22px; }

.credit {
  position: absolute;
  right: 0;
  bottom: 0;
  height: 33px;
  padding: 0 10px;
  background: rgba(255, 255, 255, .7);
  color: #333;
  font: 22px/36px "Liberation Sans", Arial, sans-serif;
}
.credit a { color: #0078a8; text-decoration: none; }
```
